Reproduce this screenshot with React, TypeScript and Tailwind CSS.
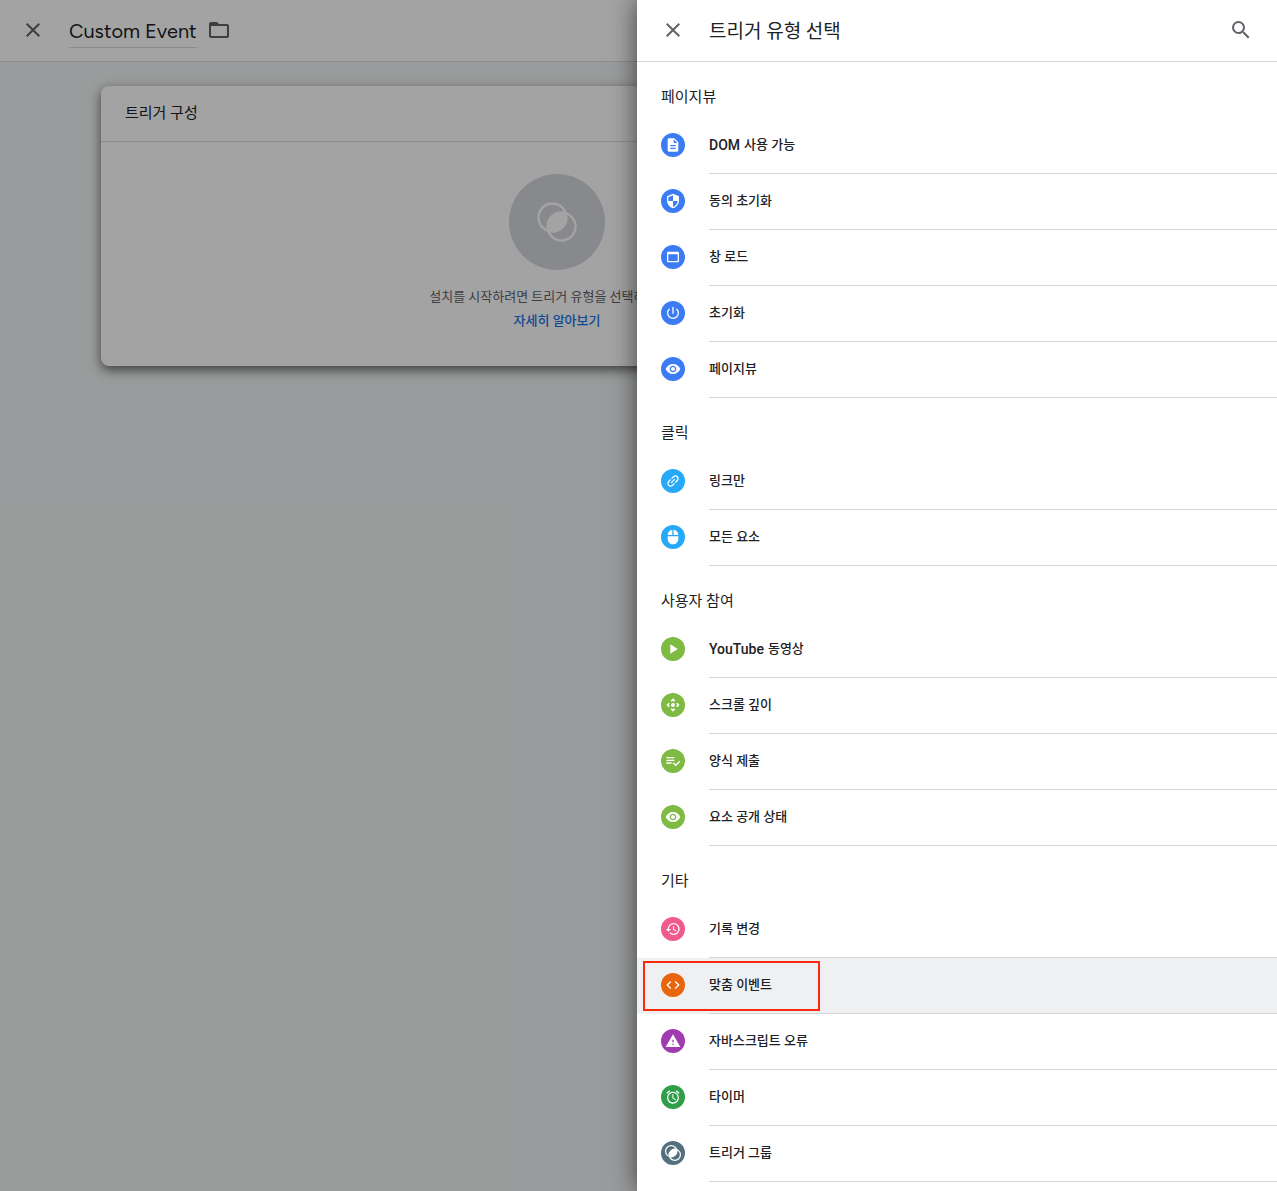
import type { ReactNode } from 'react';
import {
  MdAlarm,
  MdClose,
  MdCode,
  MdControlCamera,
  MdDescription,
  MdHistory,
  MdLink,
  MdMouse,
  MdPlayArrow,
  MdPowerSettingsNew,
  MdSearch,
  MdSecurity,
  MdVisibility,
  MdWarning,
  MdFolderOpen,
  MdWebAsset,
} from 'react-icons/md';

function TriggerIcon({ className, stroke }: { className: string; stroke: number }) {
  return (
    <svg viewBox="0 0 40 40" className={className} fill="none" stroke="currentColor" strokeWidth={stroke} aria-hidden="true">
      <circle cx="15.5" cy="15.5" r="14" />
      <circle cx="24.5" cy="24.5" r="14" />
      <path d="M28.9 11.2A14 14 0 0 1 11.2 28.9A14 14 0 0 1 28.9 11.2Z" fill="currentColor" strokeWidth="1" />
    </svg>
  );
}

function FormIcon() {
  return (
    <svg viewBox="0 0 24 24" className="size-4" fill="currentColor" aria-hidden="true">
      <path d="M14 10H2v2h12v-2zm0-4H2v2h12V6zM2 16h8v-2H2v2zm19.5-4.5L23 13l-6.99 7-4.51-4.5L13 14l3.01 3 5.49-5.5z" />
    </svg>
  );
}

type Trigger = { latin?: string; name: string; icon: ReactNode; color: string; active?: boolean };
type Group = { title: string; items: Trigger[] };

const groups: Group[] = [
  {
    title: '페이지뷰',
    items: [
      { latin: 'DOM', name: '사용 가능', icon: <MdDescription className="size-4" />, color: 'bg-[#3b7cf4]' },
      { name: '동의 초기화', icon: <MdSecurity className="size-4" />, color: 'bg-[#3b7cf4]' },
      { name: '창 로드', icon: <MdWebAsset className="size-4" />, color: 'bg-[#3b7cf4]' },
      { name: '초기화', icon: <MdPowerSettingsNew className="size-4" />, color: 'bg-[#3b7cf4]' },
      { name: '페이지뷰', icon: <MdVisibility className="size-4" />, color: 'bg-[#3b7cf4]' },
    ],
  },
  {
    title: '클릭',
    items: [
      { name: '링크만', icon: <MdLink className="size-4 -rotate-45" />, color: 'bg-[#26a9f8]' },
      { name: '모든 요소', icon: <MdMouse className="size-4" />, color: 'bg-[#26a9f8]' },
    ],
  },
  {
    title: '사용자 참여',
    items: [
      { latin: 'YouTube', name: '동영상', icon: <MdPlayArrow className="size-4" />, color: 'bg-[#7fba42]' },
      { name: '스크롤 깊이', icon: <MdControlCamera className="size-4" />, color: 'bg-[#7fba42]' },
      { name: '양식 제출', icon: <FormIcon />, color: 'bg-[#7fba42]' },
      { name: '요소 공개 상태', icon: <MdVisibility className="size-4" />, color: 'bg-[#7fba42]' },
    ],
  },
  {
    title: '기타',
    items: [
      { name: '기록 변경', icon: <MdHistory className="size-4" />, color: 'bg-[#f05a8c]' },
      { name: '맞춤 이벤트', icon: <MdCode className="size-4" />, color: 'bg-[#e8650d]', active: true },
      { name: '자바스크립트 오류', icon: <MdWarning className="size-4" />, color: 'bg-[#a03bb2]' },
      { name: '타이머', icon: <MdAlarm className="size-4" />, color: 'bg-[#2e9e48]' },
      { name: '트리거 그룹', icon: <TriggerIcon className="size-4" stroke={3} />, color: 'bg-[#54707e]' },
    ],
  },
];

function TriggerRow({ item }: { item: Trigger }) {
  return (
    <li className={item.active ? 'relative bg-[#eff0f2]' : 'relative'}>
      <button type="button" className="flex h-14 w-full items-center gap-6 pl-6 text-left">
        <span className={`mb-0.5 flex size-6 shrink-0 items-center justify-center rounded-full text-white ${item.color}`}>
          {item.icon}
        </span>
        <span className="flex h-full grow items-center gap-1 border-b border-[#d5d6d8] pb-0.5 text-[13px] font-medium">
          {item.latin && <span className="text-sm">{item.latin}</span>}
          <span>{item.name}</span>
        </span>
      </button>
      {item.active && (
        <span className="pointer-events-none absolute top-[3px] left-[6px] h-[50px] w-[177px] border-2 border-[#fb2a0c]" />
      )}
    </li>
  );
}

export default function App() {
  return (
    <div className="relative min-h-screen overflow-hidden bg-[#f1f3f4] font-[Roboto,'Noto_Sans_CJK_KR',sans-serif] text-[#202124]">
      <header className="flex h-[62px] items-center border-b border-[#dadce0] bg-white pl-[21px]">
        <button type="button" aria-label="닫기" className="pb-0.5 text-[#5f6368]">
          <MdClose className="size-6" />
        </button>
        <h1 className="mt-0.5 ml-6 border-b border-[#dadce0] font-[Figtree,Lato,sans-serif] text-xl leading-8">Custom Event</h1>
        <button type="button" aria-label="폴더" className="ml-2.5 pb-0.5 text-[#5f6368]">
          <MdFolderOpen className="size-6" />
        </button>
      </header>

      <main className="pt-6 pr-[264px] pl-[101px]">
        <section className="rounded-lg bg-white shadow-[0_4px_12px_rgba(0,0,0,0.6)]">
          <h2 className="flex h-14 items-center border-b border-[#dadce0] px-6 text-[15px]">트리거 구성</h2>
          <div className="flex h-56 flex-col items-center pt-8 text-[13px] leading-6">
            <span className="mb-[15px] flex size-24 items-center justify-center rounded-full bg-[#d5d7dd] text-white">
              <TriggerIcon className="size-10" stroke={2.4} />
            </span>
            <p className="text-[#5f6368]">설치를 시작하려면 트리거 유형을 선택하십시오.</p>
            <a href="#learn" className="font-medium text-[#1a73e8]">
              자세히 알아보기
            </a>
          </div>
        </section>
      </main>

      <div className="absolute inset-0 bg-black/36" />

      <aside className="absolute inset-y-0 right-0 w-[640px] max-w-full overflow-hidden bg-white shadow-[0_0_24px_rgba(0,0,0,0.6)]">
        <div className="flex h-[62px] items-center border-b border-[#d5d6d8] px-6">
          <button type="button" aria-label="닫기" className="pb-0.5 text-[#5f6368]">
            <MdClose className="size-6" />
          </button>
          <h2 className="ml-6 grow pt-1 text-[19px]">트리거 유형 선택</h2>
          <button type="button" aria-label="검색" className="pb-0.5 text-[#5f6368]">
            <MdSearch className="size-6" />
          </button>
        </div>
        {groups.map((group) => (
          <section key={group.title}>
            <h3 className="flex h-14 items-end px-6 pb-[7px] text-[15px] leading-7">{group.title}</h3>
            <ul>
              {group.items.map((item) => (
                <TriggerRow key={item.name} item={item} />
              ))}
            </ul>
          </section>
        ))}
      </aside>
    </div>
  );
}
